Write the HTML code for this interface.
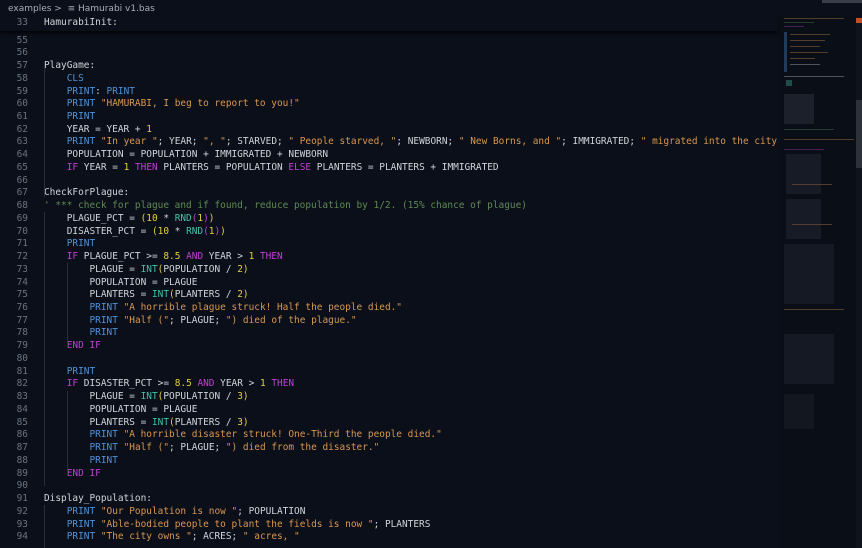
<!DOCTYPE html>
<html><head><meta charset="utf-8"><style>
*{margin:0;padding:0;box-sizing:border-box}
body{width:862px;height:548px;background:#0b0f19;overflow:hidden;position:relative;font-family:"DejaVu Sans Mono","Liberation Mono",monospace;font-size:9.45px;color:#d0d4da}
.bc{position:absolute;left:8px;top:4px;font-family:"DejaVu Sans","Liberation Sans",sans-serif;font-size:9px;color:#a8adb5;white-space:nowrap}
.ed{position:absolute;left:0;top:34.6px;width:778px;overflow:hidden}
.l{height:12.74px;line-height:12.74px;white-space:pre;position:relative}
.n{position:absolute;left:0;width:28px;text-align:right;color:#6a7380}
.t{position:absolute;left:44px}
.st{position:absolute;left:0;top:16.6px;width:778px;height:14px;background:#0b0f19;box-shadow:0 2px 3px rgba(0,0,0,.7);z-index:2}
.k{color:#4d92d8}.p{color:#c23fd4}.s{color:#d9974f}.c{color:#5f8a55}.y{color:#e6d13c}.f{color:#3fc2a8}
.g{position:absolute;width:1px;background:#2a2f38;z-index:1}
.mm{position:absolute;left:780px;top:14px;width:76px;height:534px;background:#0a0e17}
.sb{position:absolute;left:856px;top:17px;width:6px;height:531px;background:#0f131c}
</style></head><body>
<div class="bc">examples &gt; &nbsp;<span style="font-size:9px">&#8801;</span> Hamurabi v1.bas</div>
<div style="position:absolute;left:822px;top:0;width:40px;height:3px;background:#3a3f47"></div>
<div class="g" style="left:44px;top:63px;height:134px"></div>
<div class="g" style="left:44px;top:212px;height:274px"></div>
<div class="g" style="left:67px;top:263px;height:83px"></div>
<div class="g" style="left:67px;top:391px;height:83px"></div>
<div class="g" style="left:44px;top:505px;height:43px"></div>
<div class="st"><div class="l"><span class="n">33</span><span class="t">HamurabiInit:</span></div></div>
<div class="ed">
<div class="l"><span class="n">55</span><span class="t"></span></div>
<div class="l"><span class="n">56</span><span class="t"></span></div>
<div class="l"><span class="n">57</span><span class="t">PlayGame:</span></div>
<div class="l"><span class="n">58</span><span class="t">    <span class="k">CLS</span></span></div>
<div class="l"><span class="n">59</span><span class="t">    <span class="k">PRINT</span>: <span class="k">PRINT</span></span></div>
<div class="l"><span class="n">60</span><span class="t">    <span class="k">PRINT</span> <span class="s">"HAMURABI, I beg to report to you!"</span></span></div>
<div class="l"><span class="n">61</span><span class="t">    <span class="k">PRINT</span></span></div>
<div class="l"><span class="n">62</span><span class="t">    YEAR = YEAR + <span class="y">1</span></span></div>
<div class="l"><span class="n">63</span><span class="t">    <span class="k">PRINT</span> <span class="s">"In year "</span>; YEAR; <span class="s">", "</span>; STARVED; <span class="s">" People starved, "</span>; NEWBORN; <span class="s">" New Borns, and "</span>; IMMIGRATED; <span class="s">" migrated into the city</span></span></div>
<div class="l"><span class="n">64</span><span class="t">    POPULATION = POPULATION + IMMIGRATED + NEWBORN</span></div>
<div class="l"><span class="n">65</span><span class="t">    <span class="p">IF</span> YEAR = <span class="y">1</span> <span class="p">THEN</span> PLANTERS = POPULATION <span class="p">ELSE</span> PLANTERS = PLANTERS + IMMIGRATED</span></div>
<div class="l"><span class="n">66</span><span class="t"></span></div>
<div class="l"><span class="n">67</span><span class="t">CheckForPlague:</span></div>
<div class="l"><span class="n">68</span><span class="t"><span class="c">' *** check for plague and if found, reduce population by 1/2. (15% chance of plague)</span></span></div>
<div class="l"><span class="n">69</span><span class="t">    PLAGUE_PCT = <span class="y">(10</span> * <span class="f">RND</span><span class="p">(</span><span class="y">1</span><span class="p">)</span><span class="y">)</span></span></div>
<div class="l"><span class="n">70</span><span class="t">    DISASTER_PCT = <span class="y">(10</span> * <span class="f">RND</span><span class="p">(</span><span class="y">1</span><span class="p">)</span><span class="y">)</span></span></div>
<div class="l"><span class="n">71</span><span class="t">    <span class="k">PRINT</span></span></div>
<div class="l"><span class="n">72</span><span class="t">    <span class="p">IF</span> PLAGUE_PCT &gt;= <span class="y">8.5</span> <span class="p">AND</span> YEAR &gt; <span class="y">1</span> <span class="p">THEN</span></span></div>
<div class="l"><span class="n">73</span><span class="t">        PLAGUE = <span class="f">INT</span><span class="y">(</span>POPULATION / <span class="y">2)</span></span></div>
<div class="l"><span class="n">74</span><span class="t">        POPULATION = PLAGUE</span></div>
<div class="l"><span class="n">75</span><span class="t">        PLANTERS = <span class="f">INT</span><span class="y">(</span>PLANTERS / <span class="y">2)</span></span></div>
<div class="l"><span class="n">76</span><span class="t">        <span class="k">PRINT</span> <span class="s">"A horrible plague struck! Half the people died."</span></span></div>
<div class="l"><span class="n">77</span><span class="t">        <span class="k">PRINT</span> <span class="s">"Half ("</span>; PLAGUE; <span class="s">") died of the plague."</span></span></div>
<div class="l"><span class="n">78</span><span class="t">        <span class="k">PRINT</span></span></div>
<div class="l"><span class="n">79</span><span class="t">    <span class="p">END IF</span></span></div>
<div class="l"><span class="n">80</span><span class="t"></span></div>
<div class="l"><span class="n">81</span><span class="t">    <span class="k">PRINT</span></span></div>
<div class="l"><span class="n">82</span><span class="t">    <span class="p">IF</span> DISASTER_PCT &gt;= <span class="y">8.5</span> <span class="p">AND</span> YEAR &gt; <span class="y">1</span> <span class="p">THEN</span></span></div>
<div class="l"><span class="n">83</span><span class="t">        PLAGUE = <span class="f">INT</span><span class="y">(</span>POPULATION / <span class="y">3)</span></span></div>
<div class="l"><span class="n">84</span><span class="t">        POPULATION = PLAGUE</span></div>
<div class="l"><span class="n">85</span><span class="t">        PLANTERS = <span class="f">INT</span><span class="y">(</span>PLANTERS / <span class="y">3)</span></span></div>
<div class="l"><span class="n">86</span><span class="t">        <span class="k">PRINT</span> <span class="s">"A horrible disaster struck! One-Third the people died."</span></span></div>
<div class="l"><span class="n">87</span><span class="t">        <span class="k">PRINT</span> <span class="s">"Half ("</span>; PLAGUE; <span class="s">") died from the disaster."</span></span></div>
<div class="l"><span class="n">88</span><span class="t">        <span class="k">PRINT</span></span></div>
<div class="l"><span class="n">89</span><span class="t">    <span class="p">END IF</span></span></div>
<div class="l"><span class="n">90</span><span class="t"></span></div>
<div class="l"><span class="n">91</span><span class="t">Display_Population:</span></div>
<div class="l"><span class="n">92</span><span class="t">    <span class="k">PRINT</span> <span class="s">"Our Population is now "</span>; POPULATION</span></div>
<div class="l"><span class="n">93</span><span class="t">    <span class="k">PRINT</span> <span class="s">"Able-bodied people to plant the fields is now "</span>; PLANTERS</span></div>
<div class="l"><span class="n">94</span><span class="t">    <span class="k">PRINT</span> <span class="s">"The city owns "</span>; ACRES; <span class="s">" acres, "</span></span></div>
</div>
<div class="mm">
<svg width="76" height="420" style="position:absolute;left:0;top:0">
<g opacity="0.35">
<rect x="4" y="4" width="60" height="1" fill="#d9974f"/>
<rect x="4" y="8" width="30" height="1" fill="#5f8a55"/>
<rect x="4" y="12" width="20" height="1" fill="#c23fd4"/>
<rect x="4" y="18" width="3" height="40" fill="#4d92d8"/>
<rect x="10" y="20" width="40" height="1" fill="#d9974f"/>
<rect x="10" y="26" width="35" height="1" fill="#d9974f"/>
<rect x="10" y="32" width="30" height="1" fill="#d9974f"/>
<rect x="10" y="38" width="38" height="1" fill="#d9974f"/>
<rect x="10" y="44" width="25" height="1" fill="#d9974f"/>
<rect x="10" y="50" width="30" height="1" fill="#d0d4da"/>
<rect x="4" y="62" width="60" height="1" fill="#d0d4da"/>
<rect x="6" y="66" width="6" height="6" fill="#3fc2a8"/>
<rect x="4" y="80" width="30" height="30" fill="#8a90a0" opacity="0.4"/>
<rect x="4" y="115" width="50" height="1" fill="#5f8a55"/>
<rect x="4" y="125" width="70" height="1" fill="#d9974f"/>
<rect x="4" y="135" width="40" height="1" fill="#c23fd4"/>
<rect x="6" y="140" width="35" height="40" fill="#8a90a0" opacity="0.3"/>
<rect x="12" y="170" width="40" height="1" fill="#d9974f"/>
<rect x="6" y="185" width="35" height="40" fill="#8a90a0" opacity="0.3"/>
<rect x="12" y="210" width="40" height="1" fill="#d9974f"/>
<rect x="4" y="230" width="50" height="60" fill="#8a90a0" opacity="0.25"/>
<rect x="4" y="295" width="60" height="1" fill="#d9974f"/>
<rect x="4" y="320" width="50" height="50" fill="#8a90a0" opacity="0.25"/>
<rect x="4" y="380" width="30" height="35" fill="#8a90a0" opacity="0.2"/>
</g></svg>
</div>
<div class="sb"></div>
<div style="position:absolute;left:856px;top:18px;width:6px;height:5px;background:#c0502a"></div>
<div style="position:absolute;left:856px;top:100px;width:6px;height:68px;background:#2c313a"></div>
</body></html>
